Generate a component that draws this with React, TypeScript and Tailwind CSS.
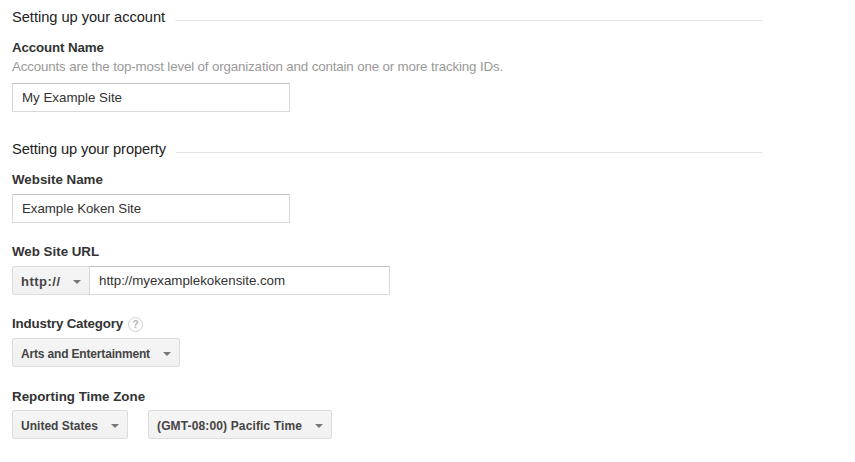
import type { ReactNode } from "react";

function Section({ title, line }: { title: string; line: string }) {
  return (
    <div className="flex h-[18px] w-[750px] items-center">
      <h2 className={`${line} shrink-0 whitespace-nowrap text-[14.67px] leading-[18px] text-[#222]`}>{title}</h2>
      <div className="mt-[7px] h-px flex-1 bg-[#e3e3e3]" />
    </div>
  );
}

function Label({ children, spacing = "" }: { children: ReactNode; spacing?: string }) {
  return <div className={`${spacing} h-4 whitespace-nowrap text-[13.33px] font-bold leading-4 text-[#333]`}>{children}</div>;
}

function Select({ text, size, spacing }: { text: string; size: string; spacing: string }) {
  return (
    <button className={`${size} flex h-[29px] items-center justify-between rounded-[2px] border border-[#dcdcdc] bg-linear-to-b from-[#f5f5f5] to-[#f1f1f1] pl-2 pr-2 font-bold text-[#444]`}>
      <span className={`${spacing} whitespace-nowrap pt-0.5`}>{text}</span>
      <span className="mt-0.5 border-x-4 border-t-4 border-x-transparent border-t-[#777]" />
    </button>
  );
}

function Field({ value, size }: { value: string; size: string }) {
  return <input readOnly value={value} className={`${size} h-[29px] border border-[#d9d9d9] border-t-[#c0c0c0] bg-white px-[9px] text-[13.33px] text-[#333] outline-none`} />;
}

export default function App() {
  return (
    <main className="h-[462px] w-[855px] overflow-hidden bg-white pl-3 pt-2 font-['Liberation_Sans',Arial,sans-serif]">
      <Section title="Setting up your account" line="w-[163px] tracking-[-0.04px]" />
      <div className="mt-3.5"><Label spacing="tracking-[-0.13px]">Account Name</Label></div>
      <p className="mt-[3px] h-4 text-[13.33px] leading-4 tracking-[-0.15px] text-[#999]">Accounts are the top-most level of organization and contain one or more tracking IDs.</p>
      <div className="mt-2 flex"><Field value="My Example Site" size="w-[278px]" /></div>
      <div className="mt-7"><Section title="Setting up your property" line="w-[164px] tracking-[-0.1px]" /></div>
      <div className="mt-3.5"><Label>Website Name</Label></div>
      <div className="mt-1.5 flex"><Field value="Example Koken Site" size="w-[278px] tracking-[-0.05px]" /></div>
      <div className="mt-[21px]"><Label>Web Site URL</Label></div>
      <div className="mt-1.5 flex">
        <Select text="http://" size="w-[78px]" spacing="text-[13px] leading-4 tracking-[0.5px]" />
        <Field value="http://myexamplekokensite.com" size="-ml-px w-[301px] tracking-[-0.02px]" />
      </div>
      <div className="mt-[21px] flex">
        <Label spacing="tracking-[-0.18px]">Industry Category</Label>
        <span className="ml-[5px] mt-px flex size-[15px] items-center justify-center rounded-full border border-[#d0d0d0] text-[10px] font-bold text-[#b5b5b5]">?</span>
      </div>
      <div className="mt-[6px] h-[29px]"><Select text="Arts and Entertainment" size="w-[168px]" spacing="text-[12px] tracking-[-0.17px]" /></div>
      <div className="mt-[22px]"><Label>Reporting Time Zone</Label></div>
      <div className="mt-[5px] flex gap-5">
        <Select text="United States" size="w-[116px]" spacing="text-[12px] tracking-[0.02px]" />
        <Select text="(GMT-08:00) Pacific Time" size="w-[184px]" spacing="text-[12px] tracking-[0.14px]" />
      </div>
    </main>
  );
}
